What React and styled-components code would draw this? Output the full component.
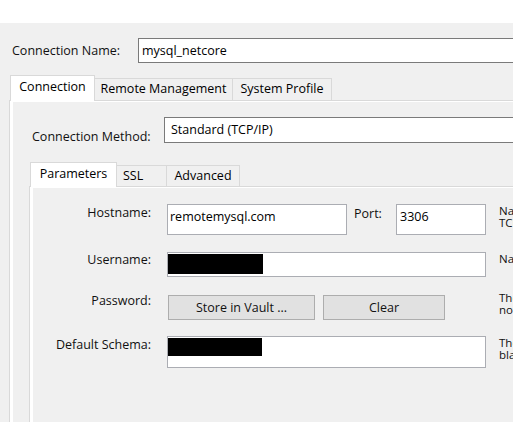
import React from "react"
import styled, { createGlobalStyle } from "styled-components"

const GlobalStyle = createGlobalStyle`
  html, body {
    margin: 0;
    padding: 0;
    overflow: hidden;
    background: #fff;
  }
  body {
    font-family: "Open Sans", "Noto Sans", sans-serif;
    font-size: 12.5px;
    color: #000;
  }
`

const Screen = styled.div`
  width: 513px;
  height: 422px;
  overflow: hidden;
  background: #fff;
  padding-top: 23px;
  box-sizing: border-box;
`

const Dialog = styled.div`
  background: #f0f0f0;
  height: 399px;
  padding-top: 15px;
  box-sizing: border-box;
`

const NameRow = styled.div`
  display: flex;
  align-items: center;
  padding-left: 12px;
`

const Label = styled.span`
  flex: none;
  width: ${p => p.$w}px;
  margin-top: ${p => p.$top || 0}px;
  line-height: 16px;
  white-space: nowrap;
  text-align: ${p => p.$align || "left"};
  color: #111;
`

const TextBox = styled.div`
  flex: none;
  box-sizing: border-box;
  width: ${p => p.$w}px;
  height: ${p => p.$h}px;
  background: #fff;
  border: 1px solid ${p => (p.$strong ? "#7a7a7a" : "#abadb3")};
  padding: ${p => p.$pad || "0 3px"};
  line-height: ${p => p.$lh || 16}px;
  white-space: nowrap;
  overflow: hidden;
`

const Redacted = styled.div`
  width: ${p => p.$w}px;
  height: ${p => p.$h}px;
  margin-top: 1px;
  background: #000;
`

const Tabs = styled.div`
  margin-left: ${p => p.$ml}px;
  margin-top: ${p => p.$mt}px;
`

const TabStrip = styled.div`
  display: flex;
  align-items: flex-end;
  height: ${p => p.$h}px;
  padding-left: 1px;
`

const Tab = styled.div`
  position: relative;
  z-index: 1;
  box-sizing: border-box;
  flex: none;
  width: ${p => p.$w}px;
  height: ${p => p.$h}px;
  margin-bottom: ${p => (p.$active ? -1 : 0)}px;
  padding: ${p => (p.$active ? 3 : 2)}px ${p => (p.$left ? "0 0 6px" : "0")};
  text-align: ${p => (p.$left ? "left" : "center")};
  line-height: 16px;
  white-space: nowrap;
  background: ${p => (p.$active ? "#fff" : "#f0f0f0")};
  border-top: 1px solid #d9d9d9;
  border-right: 1px solid #d9d9d9;
  border-left: ${p => (p.$active ? "1px solid #d9d9d9" : "none")};
`

const Panel = styled.div`
  border-top: 1px solid #d9d9d9;
  border-left: 1px solid #d9d9d9;
  background: #fff;
  padding: 1px 0 0 3px;
`

const PanelBody = styled.div`
  background: #f0f0f0;
  min-height: ${p => p.$minh}px;
  padding: ${p => p.$pad};
`

const MethodRow = styled.div`
  display: flex;
  align-items: flex-start;
  padding-left: 19px;
`

const FormRow = styled.div`
  display: flex;
  align-items: flex-start;
  margin-top: ${p => p.$mt || 0}px;
`

const FieldCell = styled.div`
  flex: none;
  display: flex;
  align-items: flex-start;
  width: 319px;
  margin-left: 16px;
`

const PortLabel = styled.span`
  flex: 1;
  margin-left: 7px;
  margin-top: 2px;
  line-height: 16px;
  color: #111;
`

const Button = styled.div`
  flex: none;
  box-sizing: border-box;
  width: ${p => p.$w}px;
  height: 25px;
  margin-top: 4px;
  margin-left: ${p => p.$ml}px;
  background: #e1e1e1;
  border: 1px solid #adadad;
  line-height: 23px;
  text-align: center;
  color: #111;
`

const Hint = styled.div`
  flex: none;
  margin-left: 13px;
  margin-top: 1px;
  font-size: 11.5px;
  line-height: 12px;
  white-space: nowrap;
  color: #111;
`

const outerTabs = [
  { label: "Connection", w: 85, active: true },
  { label: "Remote Management", w: 138 },
  { label: "System Profile", w: 99 },
]

const innerTabs = [
  { label: "Parameters", w: 87, active: true },
  { label: "SSL", w: 50, left: true },
  { label: "Advanced", w: 73 },
]

const TabRow = ({ tabs, big }) => (
  <TabStrip $h={big ? 25 : 24}>
    {tabs.map(t => (
      <Tab
        key={t.label}
        $w={t.w}
        $h={t.active ? (big ? 26 : 25) : big ? 22 : 21}
        $active={t.active}
        $left={t.left}
      >
        {t.label}
      </Tab>
    ))}
  </TabStrip>
)

const App = () => (
  <Screen>
    <GlobalStyle />
    <Dialog>
      <NameRow>
        <Label $w={126}>Connection Name:</Label>
        <TextBox $w={420} $h={25} $strong $lh={23}>
          mysql_netcore
        </TextBox>
      </NameRow>

      <Tabs $ml={9} $mt={12}>
        <TabRow tabs={outerTabs} big />
        <Panel>
          <PanelBody $minh={320} $pad="15px 0 0 0">
            <MethodRow>
              <Label $w={132} $top={12}>
                Connection Method:
              </Label>
              <TextBox $w={400} $h={26} $strong $lh={24} $pad="0 6px">
                Standard (TCP/IP)
              </TextBox>
            </MethodRow>

            <Tabs $ml={16} $mt={17}>
              <TabRow tabs={innerTabs} />
              <Panel>
                <PanelBody $minh={260} $pad="16px 0 0 0">
                  <FormRow>
                    <Label $w={118} $top={1} $align="right">
                      Hostname:
                    </Label>
                    <FieldCell>
                      <TextBox $w={180} $h={31} $pad="4px 2px 0">
                        remotemysql.com
                      </TextBox>
                      <PortLabel>Port:</PortLabel>
                      <TextBox $w={90} $h={31} $pad="4px 3px 0">
                        3306
                      </TextBox>
                    </FieldCell>
                    <Hint>
                      Name or IP address of the server host - and
                      <br />
                      TCP/IP port.
                    </Hint>
                  </FormRow>

                  <FormRow $mt={17}>
                    <Label $w={118} $align="right">
                      Username:
                    </Label>
                    <FieldCell>
                      <TextBox $w={319} $h={25} $pad="0">
                        <Redacted $w={95} $h={20} />
                      </TextBox>
                    </FieldCell>
                    <Hint>Name of the user to connect with.</Hint>
                  </FormRow>

                  <FormRow $mt={14}>
                    <Label $w={118} $top={2} $align="right">
                      Password:
                    </Label>
                    <FieldCell>
                      <Button $w={147} $ml={1}>
                        Store in Vault ...
                      </Button>
                      <Button $w={122} $ml={8}>
                        Clear
                      </Button>
                    </FieldCell>
                    <Hint>
                      The user's password. Will be requested later if it's
                      <br />
                      not set.
                    </Hint>
                  </FormRow>

                  <FormRow $mt={16}>
                    <Label $w={118} $top={1} $align="right">
                      Default Schema:
                    </Label>
                    <FieldCell>
                      <TextBox $w={319} $h={32} $pad="0">
                        <Redacted $w={94} $h={18} />
                      </TextBox>
                    </FieldCell>
                    <Hint>
                      The schema to use as default schema. Leave
                      <br />
                      blank to select it later.
                    </Hint>
                  </FormRow>
                </PanelBody>
              </Panel>
            </Tabs>
          </PanelBody>
        </Panel>
      </Tabs>
    </Dialog>
  </Screen>
)

export default App
